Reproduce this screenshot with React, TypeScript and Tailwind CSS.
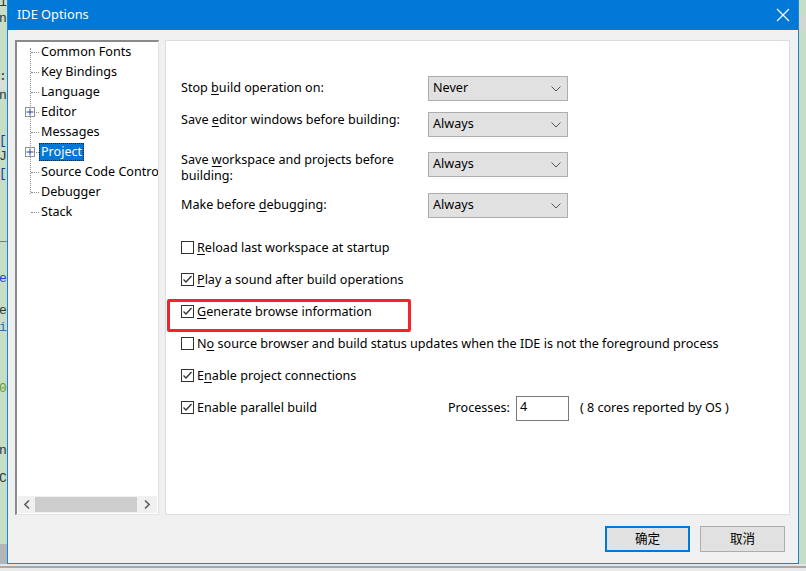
import React from 'react';

const ui = { fontFamily: '"Noto Sans", "Noto Sans CJK SC", sans-serif' };

const U = ({ children }: { children: React.ReactNode }) => <span className="underline underline-offset-2">{children}</span>;

const codeBits = [
  { y: -4, t: '1', c: 'text-[#333]' },
  { y: 12, t: 'n', c: 'text-[#333]' },
  { y: 70, t: ':', c: 'text-[#333]' },
  { y: 89, t: 'n', c: 'text-[#333]' },
  { y: 134, t: '[', c: 'text-[#1a3aa0]' },
  { y: 150, t: "J'", c: 'text-[#333]' },
  { y: 167, t: '[', c: 'text-[#1a3aa0]' },
  { y: 230, t: '_:', c: 'text-[#333]' },
  { y: 272, t: 'e', c: 'text-[#2040d0]' },
  { y: 304, t: 'e.', c: 'text-[#333]' },
  { y: 321, t: 'i', c: 'text-[#2a6cc0]' },
  { y: 382, t: '0', c: 'text-[#6a9a20]' },
  { y: 444, t: 'n.', c: 'text-[#333]' },
  { y: 472, t: "C'", c: 'text-[#333]' },
];

const Select = ({ value }: { value: string }) => (
  <div className="w-[140px] h-[25px] bg-[#e1e1e1] border border-[#adadad] flex items-center justify-between pl-[4px] pr-[6px] text-black">
    <span>{value}</span>
    <svg width="10" height="6" viewBox="0 0 10 6"><path d="M0.5 0.5 L5 5 L9.5 0.5" fill="none" stroke="#555" strokeWidth="1" /></svg>
  </div>
);

const Check = ({ on }: { on: boolean }) => (
  <div className="w-[13px] h-[13px] border border-[#333] bg-white flex items-center justify-center shrink-0">
    {on && (
      <svg width="11" height="11" viewBox="0 0 11 11"><path d="M1.5 5.5 L4 8 L9.5 2" fill="none" stroke="#333" strokeWidth="1.3" /></svg>
    )}
  </div>
);

const CheckRow = ({ on, children, extra }: { on: boolean; children: React.ReactNode; extra?: React.ReactNode }) => (
  <div className="h-[32px] flex items-center relative">
    <div className="flex items-center gap-[3px]">
      <Check on={on} />
      <span className="text-black whitespace-nowrap">{children}</span>
    </div>
    {extra}
  </div>
);

const treeItems: { label: string; plus?: boolean; selected?: boolean }[] = [
  { label: 'Common Fonts' },
  { label: 'Key Bindings' },
  { label: 'Language' },
  { label: 'Editor', plus: true },
  { label: 'Messages' },
  { label: 'Project', plus: true, selected: true },
  { label: 'Source Code Control' },
  { label: 'Debugger' },
  { label: 'Stack' },
];

export default function App() {
  return (
    <div className="w-[806px] h-[571px] bg-[#c6dec6] flex flex-col overflow-hidden text-[12.6px]" style={ui}>
      <div className="flex h-[564px]">
        {/* background editor strip */}
        <div className="w-[7px] relative overflow-hidden bg-[#c6dec6]">
          <div className="absolute left-0 top-[80px] w-full h-[10px] bg-[#d6e0d6]" />
          {codeBits.map((b, i) => (
            <div key={i} className={`absolute left-[-1px] text-[13px] leading-[14px] ${b.c}`} style={{ top: b.y, fontFamily: '"Liberation Mono", monospace' }}>{b.t}</div>
          ))}
          <div className="absolute left-0 bottom-0 w-full h-[20px] bg-[#b4b4b4]" />
        </div>

        {/* dialog */}
        <div className="w-[792px] h-[564px] border border-t-0 border-[#1883d7] bg-[#f0f0f0] flex flex-col">
          <div className="h-[30px] bg-[#0078d7] flex items-center justify-between pl-[9px] pr-[8px] text-white">
            <span className="text-[12.8px]">IDE Options</span>
            <svg width="14" height="14" viewBox="0 0 14 14"><path d="M1 1 L13 13 M13 1 L1 13" stroke="white" strokeWidth="1.2" /></svg>
          </div>

          <div className="flex-1 flex flex-col pl-[7px] pr-[8px] pt-[10px]">
            <div className="flex gap-[6px] h-[475px]">
              {/* tree */}
              <div className="w-[144px] h-full bg-white border-l-2 border-t-2 border-[#8a8a8a] border-r border-b border-r-[#e3e3e3] border-b-[#e3e3e3] flex flex-col overflow-hidden">
                <div className="flex-1 relative">
                  <div className="absolute left-[13px] top-[6px] h-[146px] border-l border-dotted border-[#8a8a8a]" />
                  {treeItems.map((it) => (
                    <div key={it.label} className="h-[20px] flex items-center relative whitespace-nowrap">
                      <div className="absolute left-[14px] top-[10px] w-[8px] border-t border-dotted border-[#8a8a8a]" />
                      {it.plus && (
                        <div className="absolute left-[8px] top-[5px] w-[10px] h-[10px] border border-[#919191] bg-white flex items-center justify-center">
                          <svg width="8" height="8" viewBox="0 0 8 8"><path d="M0.5 4 H7.5 M4 0.5 V7.5" stroke="#2b3f8a" strokeWidth="1" /></svg>
                        </div>
                      )}
                      <span
                        className={`ml-[22px] px-[2px] leading-[18px] ${it.selected ? 'bg-[#0078d7] text-white outline-1 outline-dotted outline-[#222] -outline-offset-1' : 'text-black'}`}
                      >
                        {it.label}
                      </span>
                    </div>
                  ))}
                </div>
                <div className="h-[17px] mx-[1px] mb-[1px] bg-[#f0f0f0] flex items-center">
                  <div className="w-[17px] flex justify-center">
                    <svg width="6" height="9" viewBox="0 0 6 9"><path d="M5 0.5 L1 4.5 L5 8.5" fill="none" stroke="#606060" strokeWidth="1.6" /></svg>
                  </div>
                  <div className="w-[102px] h-[15px] bg-[#cdcdcd]" />
                  <div className="flex-1 flex justify-center">
                    <svg width="6" height="9" viewBox="0 0 6 9"><path d="M1 0.5 L5 4.5 L1 8.5" fill="none" stroke="#606060" strokeWidth="1.6" /></svg>
                  </div>
                </div>
              </div>

              {/* options panel */}
              <div className="flex-1 h-full bg-white border border-[#dcdcdc] pl-[15px] pt-[35px] flex flex-col text-black">
                <div className="h-[25px] flex items-center">
                  <div className="w-[247px]">Stop <U>b</U>uild operation on:</div>
                  <Select value="Never" />
                </div>
                <div className="h-[25px] mt-[11px] flex items-start">
                  <div className="w-[247px] -mt-[1px]">Save <U>e</U>ditor windows before building:</div>
                  <Select value="Always" />
                </div>
                <div className="h-[32px] mt-[15px] flex items-start">
                  <div className="w-[247px] leading-4">Save <U>w</U>orkspace and projects before<br />building:</div>
                  <Select value="Always" />
                </div>
                <div className="h-[25px] mt-[9px] flex items-center">
                  <div className="w-[247px]">Make before <U>d</U>ebugging:</div>
                  <Select value="Always" />
                </div>

                <div className="mt-[14px] flex flex-col">
                  <CheckRow on={false}><U>R</U>eload last workspace at startup</CheckRow>
                  <CheckRow on={true}><U>P</U>lay a sound after build operations</CheckRow>
                  <CheckRow
                    on={true}
                    extra={<div className="absolute left-[-14px] top-[3px] w-[244px] h-[33px] border-[3px] border-[#f5222d] rounded-[2px]" />}
                  >
                    <U>G</U>enerate browse information
                  </CheckRow>
                  <CheckRow on={false}>N<U>o</U> source browser and build status updates when the IDE is not the foreground process</CheckRow>
                  <CheckRow on={true}>E<U>n</U>able project connections</CheckRow>
                  <div className="h-[32px] flex items-center">
                    <div className="w-[267px] flex items-center gap-[3px]">
                      <Check on={true} />
                      <span>Enable parallel build</span>
                    </div>
                    <span>Processes:</span>
                    <div className="ml-[6px] w-[53px] h-[25px] border border-[#7a7a7a] bg-white pl-[3px] leading-[20px]">4</div>
                    <span className="ml-[11px]">( 8 cores reported by OS )</span>
                  </div>
                </div>
              </div>
            </div>

            <div className="flex justify-end gap-[10px] mt-[11px] pr-[5px]">
              <button className="w-[85px] h-[26px] bg-[#e1e1e1] border-2 border-[#0078d7] text-black">确定</button>
              <button className="w-[85px] h-[26px] bg-[#e1e1e1] border border-[#adadad] text-black">取消</button>
            </div>
          </div>
        </div>

        <div className="flex-1 bg-[#c6dec6] flex flex-col">
          <div className="h-[15px]" />
          <div className="h-[16px] bg-[#d0d8d0]" />
        </div>
      </div>
      <div className="h-[2px] bg-[#e6e6e6]" />
      <div className="h-[2px] bg-[#a8a8a8]" />
      <div className="flex-1 bg-[#eaeaea]" />
    </div>
  );
}
